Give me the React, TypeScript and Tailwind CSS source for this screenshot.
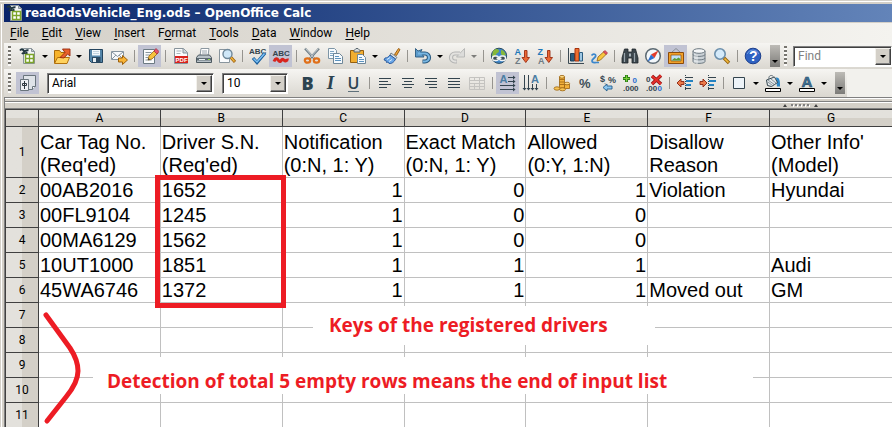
import type { ReactNode } from "react";

const svgProps = {
  width: 18,
  height: 18,
  viewBox: "0 0 18 18",
  fill: "none",
  "aria-hidden": true,
} as const;

function Icon({ children }: { children: ReactNode }) {
  return <svg {...svgProps}>{children}</svg>;
}

function IconText({ x, y, size, fill, children }: { x: number; y: number; size: number; fill: string; children: string }) {
  return (
    <text x={x} y={y} fontSize={size} fill={fill} fontWeight="700" fontFamily="'Liberation Sans', sans-serif">
      {children}
    </text>
  );
}

const SheetIcon = () => (
  <Icon>
    <path d="M4.5 1.5h8l3 3v12h-11z" fill="#f4f6f8" stroke="#8b959b" />
    <path d="M1 3.500c2-2.500 3-.5 4 .5s2-1.500 4.500-.5M3 7c2-2.500 3 .5 5.500-1.500" stroke="#20363f" strokeWidth="2" />
    <path d="M6.5 7.5h8v8h-8z" fill="#fff" stroke="#7da52a" strokeWidth="1.5" />
    <path d="M10.5 7v9M6 11.5h9" stroke="#7da52a" strokeWidth="1.3" />
    <path d="M12.500 1.500l3 3h-3z" fill="#c7cdd1" stroke="#8b959b" />
  </Icon>
);

const OpenIcon = () => (
  <Icon>
    <path d="M1.500 16V3.500h5l1.500 2h5V9" fill="#f7b32b" stroke="#a86a0c" />
    <path d="M1.500 16.500l3-6h12l-2.500 6z" fill="#ffd25e" stroke="#b3720d" />
    <path d="M7 10.500l5-5L9.500 2H17v7l-2.500-2L11 11z" fill="#e8622c" stroke="#98290e" strokeWidth="0.9" />
  </Icon>
);

const SaveIcon = () => (
  <Icon>
    <path d="M2.500 2.500h13v13h-11l-2-2z" fill="#5586a9" stroke="#24445e" />
    <path d="M5 3h8v5.500H5z" fill="#f2f7fb" />
    <path d="M6 4.500h6M6 6.500h6" stroke="#c3d4e0" />
    <path d="M5 10h8.500v5.500H5z" fill="#2c4a62" />
    <path d="M6 11h3v4H6z" fill="#e8eef2" />
  </Icon>
);

const MailIcon = () => (
  <Icon>
    <path d="M1.500 4.500h12v8h-12z" fill="#f7f9fb" stroke="#8795a0" />
    <path d="M2 5l5.500 4.500L13 5M2 12l4-4M13 12l-4-4" stroke="#8795a0" />
    <path d="M8.500 11h4V8.500l5 4.500-5 4.500V15h-4z" fill="#f8b436" stroke="#9d5f0a" />
  </Icon>
);

const EditIcon = () => (
  <Icon>
    <path d="M2.500 2.500h11v14h-11z" fill="#fbfcfd" stroke="#6c7a83" />
    <path d="M4.500 5.500h6M4.500 8h5M4.500 10.500h3M4.500 13h6" stroke="#87949c" />
    <path d="M7 13l1-4 6-6 3 3-6 6z" fill="#f6c33c" stroke="#9c6410" strokeWidth="0.8" />
    <path d="M13 4l2-2.500 3 3L16 7z" fill="#e5566c" stroke="#a42338" strokeWidth="0.7" />
    <path d="M7 13l.5-2 1.500 1.500z" fill="#333" />
  </Icon>
);

const PdfIcon = () => (
  <Icon>
    <path d="M2.500 1.500h9l4 4v11h-13z" fill="#fafbfc" stroke="#87939b" />
    <path d="M11 1.500V6h4.500" fill="#cfd6da" stroke="#87939b" />
    <path d="M4.500 4h5M4.500 6.500h4" stroke="#a9b4bb" />
    <rect x="3" y="9" width="13" height="7" fill="#d9221c" />
    <IconText x={3.6} y={15} size={6} fill="#ffffff">PDF</IconText>
  </Icon>
);

const PrintIcon = () => (
  <Icon>
    <path d="M5 9L6 1.500h8L13 9z" fill="#fff" stroke="#8c98a0" />
    <path d="M7 4h5M7 6h5" stroke="#98a4ac" />
    <path d="M1.500 10.500l2-2.500h11l2 2.500v5h-15z" fill="#b9c2c8" stroke="#4d5960" />
    <path d="M2 11h14v2.500H2z" fill="#5d6b73" />
    <path d="M4 12.500h6" stroke="#e9eef1" />
    <path d="M13 12h2v1h-2z" fill="#8bd34e" />
  </Icon>
);

const PreviewIcon = () => (
  <Icon>
    <path d="M1.500 2.500h10v13h-10z" fill="#fbfcfd" stroke="#89959d" />
    <circle cx="9.500" cy="7" r="4.500" fill="#cfe7f8" stroke="#6e8799" strokeWidth="1.400" />
    <path d="M13 10.500l4 4.500" stroke="#9b5f10" strokeWidth="3" />
    <path d="M13 10.500l3.500 4" stroke="#efb43a" strokeWidth="1.500" />
  </Icon>
);

const SpellIcon = () => (
  <Icon>
    <IconText x={0} y={7} size={8} fill="#33444e">ABC</IconText>
    <path d="M4 11l4 4.500L16 6" stroke="#1b5f9c" strokeWidth="3.200" />
    <path d="M4.500 11.500l3.500 3.500 7.500-8.500" stroke="#7cc0f4" strokeWidth="1.500" />
  </Icon>
);

const AutoSpellIcon = () => (
  <Icon>
    <IconText x={0.5} y={8.5} size={8} fill="#33444e">ABC</IconText>
    <path d="M2 14.500c1.500-3.500 3-3.500 4.500-1 1.500 2.500 2.500 0 3.500-1s2.500 2 3.500 1.500 1.500-1.500 3-1" stroke="#d8241d" strokeWidth="3" />
  </Icon>
);

const CutIcon = () => (
  <Icon>
    <path d="M2 1.500l10 11M16 1.500l-10 11" stroke="#6f7d86" strokeWidth="2.200" />
    <path d="M2.500 1.500l9 10M15.500 1.500l-9 10" stroke="#d8dfe3" strokeWidth="0.800" />
    <ellipse cx="4.500" cy="13.500" rx="2.700" ry="2.200" stroke="#e0701a" strokeWidth="2.200" />
    <ellipse cx="13.500" cy="13.500" rx="2.700" ry="2.200" stroke="#e0701a" strokeWidth="2.200" />
  </Icon>
);

const CopyIcon = () => (
  <Icon>
    <path d="M2.500 1.500h6l2 2v8h-8z" fill="#f6fafd" stroke="#7d95a6" />
    <path d="M4 4.500h4M4 6.500h5M4 8.500h4" stroke="#7fa6c4" />
    <path d="M7.500 6.500h6l3 3v7h-9z" fill="#f6fafd" stroke="#6f8798" />
    <path d="M9 9.500h4M9 11.500h6M9 13.500h6" stroke="#5c93bf" />
  </Icon>
);

const PasteIcon = () => (
  <Icon>
    <path d="M1.500 3.500h13v12h-13z" fill="#f2ae30" stroke="#96600f" />
    <path d="M5 5V3.500l2-2h2l2 2V5z" fill="#d5dadd" stroke="#59656d" />
    <path d="M8.500 7.500h5l3 3v6h-8z" fill="#f6fafd" stroke="#6f8798" />
    <path d="M10 10.500h3M10 12.500h5M10 14.500h5" stroke="#5c93bf" />
  </Icon>
);

const BrushIcon = () => (
  <Icon>
    <path d="M11.500 7.500l4-6 1.500 1-3.500 6z" fill="#f2a83a" stroke="#8d540d" strokeWidth="0.900" />
    <path d="M8 6l6 4.500-1.500 1.500L7 8z" fill="#dfe4e7" stroke="#5a6972" strokeWidth="0.800" />
    <path d="M7 8l5.500 4c-1 3-4 5-6.500 4.500L5 15l-1.500.500-.5-2L1 13l1-2c2 0 3.500-1 5-3z" fill="#6ba7e8" stroke="#23549a" strokeWidth="0.900" />
    <path d="M4 12.500l3-2M6 14.500l3-2" stroke="#d5e8fb" />
  </Icon>
);

const UndoIcon = () => (
  <Icon>
    <path d="M3 6.500h8a3.800 3.800 0 0 1 0 8H8.500" stroke="#28597f" strokeWidth="4.200" />
    <path d="M8 2.500L6.500 5 10 10H1.500V1.500L4 4z" fill="#5c9bcb" stroke="#28597f" strokeWidth="0.900" />
    <path d="M4 6.500h7a3.800 3.800 0 0 1 0 8H9" stroke="#79b7e3" strokeWidth="2.200" />
  </Icon>
);

const RedoIcon = () => (
  <Icon>
    <path d="M12 6.500H7a3.800 3.800 0 0 0 0 8h2" stroke="#b4b5b4" strokeWidth="4.200" />
    <path d="M16.500 1.500v8.500h-8z" fill="#dcdcda" stroke="#b4b5b4" strokeWidth="0.900" />
    <path d="M12 6.500H7a3.800 3.800 0 0 0 0 8h1.500" stroke="#e3e2df" strokeWidth="2.200" />
  </Icon>
);

const LinkIcon = () => (
  <Icon>
    <circle cx="9" cy="8.800" r="7.600" fill="#3f86c9" stroke="#2a4a5e" />
    <path d="M3 4c3-3 6-2 6 0s-3 2-3 4-3 1-4 1zM11 3c3 0 4 3 5 5l-3 1-2-2z" fill="#86b83a" />
    <rect x="2.500" y="9" width="6" height="4.500" rx="2.200" fill="#3c4b54" stroke="#f2f4f5" strokeWidth="1.300" />
    <rect x="9.500" y="9" width="6" height="4.500" rx="2.200" fill="#3c4b54" stroke="#f2f4f5" strokeWidth="1.300" />
    <path d="M6.500 11.300h5" stroke="#f2f4f5" strokeWidth="1.400" />
  </Icon>
);

function SortIcon({ top, bottom }: { top: string; bottom: string }) {
  return (
    <Icon>
      <IconText x={1.5} y={8} size={9} fill="#1f78b9">{top}</IconText>
      <IconText x={2} y={17} size={9} fill="#6f7b83">{bottom}</IconText>
      <path d="M11.500 3.500h2.500v7h2.500l-3.700 5-3.800-5h2.500z" fill="#ec6a35" stroke="#9b2c12" strokeWidth="0.900" />
    </Icon>
  );
}

const ChartIcon = () => (
  <Icon>
    <path d="M1.500 1v15.500H17" stroke="#3c4a53" />
    <path d="M3.500 6.500h4V14h-4z" fill="#2c5d80" stroke="#1d3f59" />
    <path d="M8 1.500h4V14H8z" fill="#ee6f30" stroke="#a5330f" />
    <path d="M12.500 5.500h3V14h-3z" fill="#9fc8e4" stroke="#2c5d80" />
  </Icon>
);

const DrawIcon = () => (
  <Icon>
    <path d="M1.500 8.500c2-2.500 5-1 4 1s-3.500 2.500-3.500 4.500 2.500 1.500 4 1.500h3" stroke="#3a86cc" strokeWidth="1.700" />
    <path d="M7 14l1-4 6-5.500 2.500 2.500-6 6z" fill="#f8c640" stroke="#93600f" strokeWidth="0.800" />
    <path d="M13.500 5l1.500-1.500 2.500 2.500L16 7.500z" fill="#e5566c" stroke="#a42338" strokeWidth="0.700" />
  </Icon>
);

const BinocularsIcon = () => (
  <Icon>
    <path d="M3.500 2h3.500v3h4V2h3.500l2.500 9v5h-6v-5H7v5H1v-5z" fill="#3d474d" stroke="#1f272b" strokeWidth="0.800" />
    <path d="M3.500 6v9M13.500 6v9" stroke="#98a4ab" strokeWidth="1.200" />
    <path d="M8 6.500h2v3H8z" fill="#aab4ba" />
  </Icon>
);

const CompassIcon = () => (
  <Icon>
    <circle cx="9" cy="9" r="7.300" fill="#f3f7fa" stroke="#5c6a73" strokeWidth="1.500" />
    <path d="M14.500 3.500L10.500 11 7 7.500z" fill="#e33b2a" />
    <path d="M3.500 14.500l3.500-7 3.500 3.500z" fill="#2b6fd0" />
  </Icon>
);

const GalleryIcon = () => (
  <Icon>
    <path d="M5 5l4-3.500L13 5" stroke="#8a8f96" />
    <path d="M1.500 5.500h15v11h-15z" fill="#f0a12a" stroke="#8c4b0b" />
    <path d="M4 8h10v6H4z" fill="#bfe0f8" stroke="#8c4b0b" strokeWidth="0.700" />
    <path d="M4.500 13.500l3-2.500 2 1 2-1.500 2 1.500v1.500z" fill="#5b9a35" />
  </Icon>
);

const DatabaseIcon = () => (
  <Icon>
    <path d="M3 4v10.500c0 2.500 12 2.500 12 0V4" fill="#cbd2d7" stroke="#6d7981" />
    <path d="M3 7.500c0 2.500 12 2.500 12 0M3 11c0 2.500 12 2.500 12 0" stroke="#6d7981" />
    <ellipse cx="9" cy="4" rx="6" ry="2.300" fill="#f5f7f8" stroke="#6d7981" />
    <path d="M5 7v9M7 8v9" stroke="#fbfcfc" strokeWidth="0.800" />
  </Icon>
);

const ZoomIcon = () => (
  <Icon>
    <circle cx="7" cy="7" r="5.200" fill="#d4eafa" stroke="#6b8fac" strokeWidth="1.600" />
    <path d="M11 11l5 5" stroke="#93600f" strokeWidth="3.400" />
    <path d="M11.500 11.500l4 4" stroke="#f3bb3f" strokeWidth="1.700" />
  </Icon>
);

const HelpIcon = () => (
  <Icon>
    <circle cx="9" cy="9" r="7.800" fill="#2f62c2" stroke="#1c3f8c" />
    <path d="M3 7a6.500 6.500 0 0 1 12 0" stroke="#6d98e0" />
    <IconText x={5} y={14} size={14} fill="#ffffff">?</IconText>
  </Icon>
);

const StylesIcon = () => (
  <Icon>
    <path d="M4.500 1.500h12v11l-3 3h-9z" fill="#dfe3e8" stroke="#69747c" />
    <path d="M16.500 12.500h-3v3" fill="#fff" stroke="#69747c" />
    <path d="M1.500 5.500h8v11h-8z" fill="#eef0f3" stroke="#69747c" />
    <path d="M5.500 7v8M3.500 9.500h4v2h-4z" stroke="#2c373e" />
  </Icon>
);

function AlignIcon({ d }: { d: string }) {
  return (
    <Icon>
      <path d={d} stroke="#33444e" />
    </Icon>
  );
}

const MergeIcon = () => (
  <Icon>
    <path d="M1.500 3.500h15v12h-15zM1.500 6.500h15M1.500 9.500h15M1.500 12.500h15M6.500 3.500v3M6.500 9.500v6M11.500 3.500v12" stroke="#c4c3c0" />
  </Icon>
);

const LtrIcon = () => (
  <Icon>
    <IconText x={0.5} y={9} size={11} fill="#4c7ea3">A</IconText>
    <path d="M9 3.500h7M9 7.500h7M1 11.500h15M1 15.500h15" stroke="#33444e" />
    <path d="M14 1.500l2.500 2-2.500 2zM14 5.500l2.500 2-2.500 2zM14 9.500l2.500 2-2.500 2zM14 13.500l2.500 2-2.500 2z" fill="#33444e" />
  </Icon>
);

const TopDownIcon = () => (
  <Icon>
    <IconText x={9} y={9} size={11} fill="#4c7ea3">A</IconText>
    <path d="M2.500 1v15M6.500 1v15M10.500 10v6M14.500 10v6" stroke="#33444e" />
    <path d="M.5 14l2 2.500 2-2.500zM4.500 14l2 2.500 2-2.500zM8.500 14l2 2.500 2-2.500zM12.500 14l2 2.500 2-2.500z" fill="#33444e" />
  </Icon>
);

const CurrencyIcon = () => (
  <Icon>
    <path d="M6.500 3v11h5V3z" fill="#f3b13b" stroke="#9a620f" strokeWidth="0.800" />
    <path d="M6.500 5.500h5M6.500 8h5M6.500 10.500h5" stroke="#9a620f" strokeWidth="0.800" />
    <ellipse cx="9" cy="2.800" rx="2.600" ry="1.400" fill="#ffdc85" stroke="#9a620f" strokeWidth="0.800" />
    <path d="M11.500 10v4.500h5V10" fill="#f3b13b" stroke="#9a620f" strokeWidth="0.800" />
    <ellipse cx="14" cy="9.500" rx="2.600" ry="1.300" fill="#ffdc85" stroke="#9a620f" strokeWidth="0.800" />
    <ellipse cx="4" cy="14.500" rx="3" ry="1.700" fill="#f7c455" stroke="#9a620f" strokeWidth="0.800" />
    <ellipse cx="9.500" cy="15.300" rx="3" ry="1.500" fill="#f7c455" stroke="#9a620f" strokeWidth="0.800" />
  </Icon>
);

const PercentIcon = () => (
  <Icon>
    <IconText x={3} y={14} size={13} fill="#3d4f59">%</IconText>
  </Icon>
);

const StandardFormatIcon = () => (
  <Icon>
    <IconText x={1} y={8} size={9} fill="#33444e">$</IconText>
    <IconText x={9} y={9} size={9} fill="#33444e">%</IconText>
    <path d="M6 9.500l1 1" stroke="#33444e" />
    <path d="M4 13.500l4-3.500v2h5v3H8v2z" fill="#8cc6ee" stroke="#235f8f" strokeWidth="0.900" />
  </Icon>
);

const AddDecimalIcon = () => (
  <Icon>
    <path d="M4.500 1v7M1 4.500h7" stroke="#2a7d16" strokeWidth="3" />
    <path d="M4.500 1.500v6M1.500 4.500h6" stroke="#79cf3a" strokeWidth="1.200" />
    <IconText x={10.5} y={9} size={8} fill="#2b6fd0">0</IconText>
    <IconText x={1} y={17} size={8} fill="#33444e">.000</IconText>
  </Icon>
);

const DeleteDecimalIcon = () => (
  <Icon>
    <IconText x={1} y={8} size={8} fill="#33444e">0</IconText>
    <IconText x={1} y={17} size={8} fill="#33444e">.00</IconText>
    <IconText x={12.5} y={17} size={8} fill="#2b6fd0">0</IconText>
    <path d="M7 2l9 8M16 1.500L7 10" stroke="#8c0f0f" strokeWidth="3.400" />
    <path d="M7 2l9 8M16 1.500L7 10" stroke="#e6302b" strokeWidth="2" />
  </Icon>
);

function IndentIcon({ arrow }: { arrow: string }) {
  return (
    <Icon>
      <path d="M9.500 1v16" stroke="#33444e" strokeDasharray="1 1" />
      <path d="M9 3.500h8M9 14.500h6" stroke="#33444e" />
      <path d="M10 7h7M10 11h5" stroke="#2482c1" strokeWidth="2" />
      <path d={arrow} fill="#ec7a4a" stroke="#8b2410" strokeWidth="0.900" />
    </Icon>
  );
}

const BorderIcon = () => (
  <Icon>
    <path d="M3.500 3.500h11v11h-11z" fill="#edf3f8" stroke="#33444e" />
  </Icon>
);

const FillIcon = () => (
  <Icon>
    <path d="M12 3.500c4-.5 4 4.500 4 9h-3z" fill="#2b86c6" />
    <path d="M2.500 6l8-3 3 5.500-6 4-4-1z" fill="#e3e8eb" stroke="#33444e" />
    <path d="M4 6l7 5M7 5l5 4M4 8l5 4" stroke="#6f7d86" strokeWidth="0.800" />
    <path d="M5 5c-1-4 4-5 5-1" stroke="#5f6d76" />
    <path d="M1.500 14.500h15v3h-15z" fill="#fff" stroke="#000" />
  </Icon>
);

const FontColorIcon = () => (
  <Icon>
    <text x="3.500" y="12.500" fontSize="15" fontWeight="700" fill="#3f7298" stroke="#274b66" strokeWidth="0.600" fontFamily="'Liberation Sans', sans-serif">A</text>
    <path d="M1.500 14.500h15v3h-15z" fill="#fff" stroke="#000" />
  </Icon>
);

function Caret() {
  return (
    <svg width="6" height="3" viewBox="0 0 6 3" aria-hidden="true">
      <path d="M0 0h6L3 3z" fill="currentColor" />
    </svg>
  );
}

function Tool({ label, active, children }: { label: string; active?: boolean; children: ReactNode }) {
  return (
    <button
      type="button"
      aria-label={label}
      className={`flex h-[22px] w-[23px] shrink-0 items-center justify-center ${active ? "bg-[#c1c3d3]" : ""}`}
    >
      {children}
    </button>
  );
}

function Drop({ label, muted }: { label: string; muted?: boolean }) {
  return (
    <button
      type="button"
      aria-label={label}
      className={`flex h-[22px] w-[11px] shrink-0 items-center justify-center ${muted ? "text-[#7d7d7b]" : "text-black"}`}
    >
      <Caret />
    </button>
  );
}

function Separator() {
  return (
    <div className="flex w-2 shrink-0 justify-center">
      <div className="h-3 w-px bg-[#96948f]" />
    </div>
  );
}

function Grip() {
  return (
    <div className="ml-1 h-5 w-[3px] shrink-0 bg-[repeating-linear-gradient(to_bottom,#77756f_0px,#77756f_2px,#fbfaf8_2px,#fbfaf8_4px)]" />
  );
}

function Overflow() {
  return (
    <button
      type="button"
      aria-label="More"
      className="flex h-[22px] w-[10px] shrink-0 items-end justify-center bg-linear-to-b from-[#bdbbb6] to-[#7d7c79] pb-1"
    >
      <Caret />
    </button>
  );
}

const sunken = "border border-t-[#808080] border-l-[#808080] border-r-white border-b-white bg-white shadow-[inset_1px_1px_0_#404040]";
const bevel =
  "flex items-center justify-center border border-t-[#f3f1ec] border-l-[#f3f1ec] border-r-[#404040] border-b-[#404040] bg-[#d4d0c8] shadow-[inset_-1px_-1px_0_#808080]";

function Combo({ label, value, width }: { label: string; value: string; width: string }) {
  return (
    <div className={`relative flex h-[21px] shrink-0 ${width} ${sunken}`}>
      <select
        aria-label={label}
        defaultValue={value}
        className="w-full appearance-none bg-transparent pl-1 font-[Roboto,sans-serif] text-[12px] leading-[19px] text-black outline-none"
      >
        <option>{value}</option>
      </select>
      <span className={`pointer-events-none absolute top-px right-px bottom-px w-4 ${bevel}`}>
        <Caret />
      </span>
    </div>
  );
}

const menus: [string, string, string][] = [
  ["", "F", "ile"],
  ["", "E", "dit"],
  ["", "V", "iew"],
  ["", "I", "nsert"],
  ["F", "o", "rmat"],
  ["", "T", "ools"],
  ["", "D", "ata"],
  ["", "W", "indow"],
  ["", "H", "elp"],
];

const columns = ["A", "B", "C", "D", "E", "F", "G"];

const header = [
  ["Car Tag No.", "(Req'ed)"],
  ["Driver S.N.", "(Req'ed)"],
  ["Notification", "(0:N, 1: Y)"],
  ["Exact Match", "(0:N, 1: Y)"],
  ["Allowed", "(0:Y, 1:N)"],
  ["Disallow", "Reason"],
  ["Other Info'", "(Model)"],
];

const rows: string[][] = [
  ["00AB2016", "1652", "1", "0", "1", "Violation", "Hyundai"],
  ["00FL9104", "1245", "1", "0", "0", "", ""],
  ["00MA6129", "1562", "1", "0", "0", "", ""],
  ["10UT1000", "1851", "1", "1", "1", "", "Audi"],
  ["45WA6746", "1372", "1", "1", "1", "Moved out", "GM"],
  ["", "", "", "", "", "", ""],
  ["", "", "", "", "", "", ""],
  ["", "", "", "", "", "", ""],
  ["", "", "", "", "", "", ""],
  ["", "", "", "", "", "", ""],
];

const cell = "border-r border-b border-[#c0c0c0] px-px py-0 align-bottom last:border-r-0";
const rowHead =
  "border-r border-b border-[#404040] bg-linear-to-r from-[#e3e1dc] from-50% to-[#d4d0c8] to-50% p-0 text-center font-[Roboto,sans-serif] text-[12px] font-normal leading-4";
const colHead =
  "h-[17px] border-r border-b border-[#404040] bg-linear-to-b from-[#e3e1dc] from-50% to-[#d4d0c8] to-50% p-0 text-center font-[Roboto,sans-serif] text-[12px] font-normal leading-4 last:border-r-0";
const note =
  "absolute flex bg-white font-['Open_Sans','Noto_Sans_CJK_KR',sans-serif] text-[19px] font-bold leading-[24px] whitespace-nowrap text-[#ed1c24]";

function Sheet() {
  return (
    <table className="w-full table-fixed border-separate border-spacing-0 border-t border-l border-[#404040] bg-white font-['Liberation_Sans',Arial,sans-serif] text-[20px] leading-[23px] text-black">
      <colgroup>
        <col className="w-[33px]" />
        {columns.map((c) => (
          <col key={c} />
        ))}
      </colgroup>
      <thead>
        <tr>
          <td className={colHead} />
          {columns.map((c) => (
            <th key={c} scope="col" className={colHead}>
              {c}
            </th>
          ))}
        </tr>
      </thead>
      <tbody>
        <tr className="h-[51px]">
          <th scope="row" className={rowHead}>1</th>
          {header.map(([a, b], i) => (
            <td key={i} className={`whitespace-nowrap ${cell}`}>
              {a}
              <br />
              {b}
            </td>
          ))}
        </tr>
        {rows.map((r, i) => (
          <tr key={i} className="h-[25px]">
            <th scope="row" className={rowHead}>{i + 2}</th>
            {r.map((v, j) => (
              <td key={j} className={`whitespace-nowrap ${cell} ${j >= 2 && j <= 4 ? "text-right" : "text-left"}`}>
                {v}
              </td>
            ))}
          </tr>
        ))}
      </tbody>
    </table>
  );
}

export default function App() {
  return (
    <div className="h-screen overflow-hidden bg-[#d4d0c8] pt-px font-[Roboto,sans-serif] text-[12px] text-black">
      <div className="flex min-h-full border-t border-white pt-0.5">
        <div className="w-1 shrink-0 border-r-2 border-[#d4d0c8] bg-linear-to-r from-[#d4d0c8] from-50% to-white to-50%" />
        <div className="min-w-0 grow">
          <header className="flex h-[18px] items-center gap-px bg-linear-to-r from-[#0a246a] to-[#6384b9] pl-0.5 text-white">
            <SheetIcon />
            <h1 className="font-['DejaVu_Sans',sans-serif] text-[12px] font-bold leading-[18px] whitespace-nowrap">
              readOdsVehicle_Eng.ods – OpenOffice Calc
            </h1>
          </header>

          <nav className="mt-px flex h-5 items-center gap-[13px] bg-linear-to-r from-[#d4d0c8] to-[#f4f3ef] pl-1.5">
            {menus.map(([pre, key, post]) => (
              <button key={key + post} type="button" className="leading-5">
                {pre}
                <span className="underline underline-offset-2">{key}</span>
                {post}
              </button>
            ))}
          </nav>

          <div className="flex h-[26px] items-center bg-linear-to-b from-[#f6f5f2] to-[#dad7d0]">
            <Grip />
            <div className="ml-[5px] flex items-center">
              <Tool label="New"><SheetIcon /></Tool>
              <Drop label="New options" />
              <Tool label="Open"><OpenIcon /></Tool>
              <Drop label="Open options" />
              <Tool label="Save"><SaveIcon /></Tool>
              <Tool label="E-mail"><MailIcon /></Tool>
              <Separator />
              <Tool label="Edit file" active><EditIcon /></Tool>
              <Separator />
              <Tool label="Export as PDF"><PdfIcon /></Tool>
              <Tool label="Print"><PrintIcon /></Tool>
              <Tool label="Page preview"><PreviewIcon /></Tool>
              <Separator />
              <Tool label="Spelling"><SpellIcon /></Tool>
              <Tool label="Auto spellcheck" active><AutoSpellIcon /></Tool>
              <Separator />
              <Tool label="Cut"><CutIcon /></Tool>
              <Tool label="Copy"><CopyIcon /></Tool>
              <Tool label="Paste"><PasteIcon /></Tool>
              <Drop label="Paste options" />
              <Tool label="Format paintbrush"><BrushIcon /></Tool>
              <Separator />
              <Tool label="Undo"><UndoIcon /></Tool>
              <Drop label="Undo history" />
              <Tool label="Redo"><RedoIcon /></Tool>
              <Drop label="Redo history" muted />
              <Separator />
              <Tool label="Hyperlink"><LinkIcon /></Tool>
              <Tool label="Sort ascending"><SortIcon top="A" bottom="Z" /></Tool>
              <Tool label="Sort descending"><SortIcon top="Z" bottom="A" /></Tool>
              <Separator />
              <Tool label="Chart"><ChartIcon /></Tool>
              <Tool label="Draw functions"><DrawIcon /></Tool>
              <Separator />
              <Tool label="Find and replace"><BinocularsIcon /></Tool>
              <Tool label="Navigator"><CompassIcon /></Tool>
              <Tool label="Gallery" active><GalleryIcon /></Tool>
              <Tool label="Data sources"><DatabaseIcon /></Tool>
              <Tool label="Zoom"><ZoomIcon /></Tool>
              <Separator />
              <Tool label="Help"><HelpIcon /></Tool>
            </div>
            <div className="ml-1.5 flex grow items-center">
              <Overflow />
              <Grip />
              <div className={`relative ml-1.5 flex h-[21px] min-w-24 grow ${sunken}`}>
                <input
                  type="text"
                  aria-label="Find"
                  placeholder="Find"
                  className="w-full min-w-0 bg-transparent pl-1 text-[12px] leading-[19px] outline-none placeholder:text-[#808080]"
                />
                <button type="button" aria-label="Find history" className={`absolute top-px right-0 bottom-px w-4 ${bevel}`}>
                  <Caret />
                </button>
              </div>
            </div>
          </div>

          <div className="flex h-7 bg-[#f2f1ed]">
            <div className="flex items-center bg-linear-to-b from-[#f6f5f2] to-[#dad7d0] pr-0.5">
              <Grip />
              <div className="ml-[5px] flex items-center">
                <Tool label="Styles and formatting" active><StylesIcon /></Tool>
              </div>
              <div className="ml-2 flex gap-2">
                <Combo label="Font name" value="Arial" width="w-[167px]" />
                <Combo label="Font size" value="10" width="w-[66px]" />
              </div>
              <div className="ml-2 flex items-center text-[#2c4350]">
                <Tool label="Bold">
                  <span className="font-['Open_Sans',sans-serif] text-[18px] leading-[22px] font-extrabold">B</span>
                </Tool>
                <Tool label="Italic">
                  <span className="font-['Liberation_Serif',serif] text-[19px] leading-[22px] font-bold italic">I</span>
                </Tool>
                <Tool label="Underline">
                  <span className="border-b border-[#5f717b] font-['Open_Sans',sans-serif] text-[16px] leading-[16px] font-semibold">U</span>
                </Tool>
                <Separator />
                <Tool label="Align left"><AlignIcon d="M3 4.500h12M3 7.500h9M3 10.500h12M3 13.500h8" /></Tool>
                <Tool label="Align center"><AlignIcon d="M3 4.500h12M5 7.500h8M3 10.500h12M5 13.500h8" /></Tool>
                <Tool label="Align right"><AlignIcon d="M3 4.500h12M6 7.500h9M3 10.500h12M7 13.500h8" /></Tool>
                <Tool label="Justify"><AlignIcon d="M3 4.500h12M3 7.500h12M3 10.500h12M3 13.500h12" /></Tool>
                <Tool label="Merge cells"><MergeIcon /></Tool>
                <Separator />
                <Tool label="Text direction left to right" active><LtrIcon /></Tool>
                <Tool label="Text direction top to bottom"><TopDownIcon /></Tool>
                <Separator />
                <Tool label="Currency"><CurrencyIcon /></Tool>
                <Tool label="Percent"><PercentIcon /></Tool>
                <Tool label="Standard format"><StandardFormatIcon /></Tool>
                <Tool label="Add decimal place"><AddDecimalIcon /></Tool>
                <Tool label="Delete decimal place"><DeleteDecimalIcon /></Tool>
                <Separator />
                <Tool label="Decrease indent"><IndentIcon arrow="M1 9l4-4v2.500h3v3H5V13z" /></Tool>
                <Tool label="Increase indent"><IndentIcon arrow="M8 9L4 5v2.500H1v3h3V13z" /></Tool>
                <Separator />
                <Tool label="Borders"><BorderIcon /></Tool>
                <Drop label="Border options" />
                <Tool label="Background color"><FillIcon /></Tool>
                <Drop label="Background color options" />
                <Tool label="Font color"><FontColorIcon /></Tool>
                <Drop label="Font color options" />
              </div>
              <div className="ml-1.5 flex text-black">
                <Overflow />
              </div>
            </div>
          </div>

          <div className="border-t border-l border-[#808080]">
            <div className="h-[3px] border-t border-white bg-[#d4d0c8]" />
            <div className="flex h-[7px] items-center justify-end border-t border-[#808080] bg-[#d4d0c8] pr-[73px] shadow-[inset_0_1px_0_#ffffff]">
              <svg width="36" height="3" viewBox="0 0 36 3" aria-hidden="true">
                <path d="M0 3l2-3 2 3zM31 3l2-3 2 3z" fill="#404040" />
                <path d="M8 1h20" stroke="#808080" strokeWidth="2" strokeDasharray="2 2" />
                <path d="M10 2h18" stroke="#ffffff" strokeWidth="2" strokeDasharray="1 3" />
              </svg>
            </div>
            <main className="relative border-t border-[#808080]">
              <Sheet />
              <div className="absolute top-[66px] left-[150px] h-[133px] w-[131px] border-5 border-[#ed1c24]" />
              <svg className="absolute top-[200px] left-[36px]" width="44" height="120" viewBox="0 0 44 120" fill="none" aria-hidden="true">
                <path d="M5 6l24 33c6 9 8 16 8 23s-3 15-12 26L6 112" stroke="#ed1c24" strokeWidth="5" strokeLinecap="round" strokeLinejoin="round" />
              </svg>
              <p className={`top-[197px] left-[308px] h-[39px] w-[342px] pt-[7px] pl-4 ${note}`}>
                Keys of the registered drivers
              </p>
              <p className={`top-[248px] left-[88px] h-[37px] w-[660px] pt-3 pl-3.5 ${note}`}>
                Detection of total 5 empty rows means the end of input list
              </p>
            </main>
          </div>
        </div>
      </div>
    </div>
  );
}
